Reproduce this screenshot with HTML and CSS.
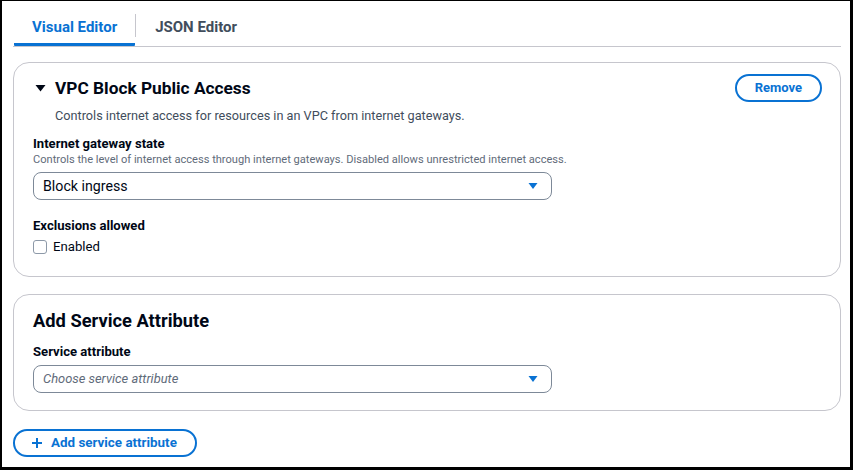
FILE: index.html
```html
<!DOCTYPE html>
<html lang="en">
<head>
<meta charset="utf-8">
<title>Editor</title>
<link rel="stylesheet" href="styles.css">
</head>
<body>
<div class="frame">
  <div class="tabs">
    <div class="tab tab-active">Visual Editor</div>
    <div class="tab-sep"></div>
    <div class="tab">JSON Editor</div>
  </div>

  <section class="card card-vpc">
    <div class="card-head">
      <div class="card-title-wrap">
        <svg class="caret" width="16" height="16" viewBox="0 0 16 16"><path d="M2.5 5h10l-5 6.5z" fill="#000716"/></svg>
        <h2 class="card-title title-vpc">VPC Block Public Access</h2>
      </div>
      <button class="btn btn-remove">Remove</button>
    </div>
    <p class="card-desc">Controls internet access for resources in an VPC from internet gateways.</p>

    <div class="field">
      <div class="label">Internet gateway state</div>
      <div class="hint">Controls the level of internet access through internet gateways. Disabled allows unrestricted internet access.</div>
      <div class="select">
        <span class="select-value">Block ingress</span>
        <svg class="select-caret" width="16" height="16" viewBox="0 0 16 16"><path d="M3.5 5h9l-4.5 6z" fill="#0972d3"/></svg>
      </div>
    </div>

    <div class="field field-excl">
      <div class="label">Exclusions allowed</div>
      <label class="check-row">
        <span class="checkbox"></span>
        <span class="check-text">Enabled</span>
      </label>
    </div>
  </section>

  <section class="card card-add">
    <h2 class="card-title title-add">Add Service Attribute</h2>
    <div class="field field-svc">
      <div class="label">Service attribute</div>
      <div class="select select-svc">
        <span class="select-placeholder">Choose service attribute</span>
        <svg class="select-caret" width="16" height="16" viewBox="0 0 16 16"><path d="M3.5 5h9l-4.5 6z" fill="#0972d3"/></svg>
      </div>
    </div>
  </section>

  <div class="add-row">
    <button class="btn btn-add">
      <svg class="plus" width="16" height="16" viewBox="0 0 16 16"><path d="M3 8h10M8 3v10" stroke="#0972d3" stroke-width="2" fill="none"/></svg>
      <span>Add service attribute</span>
    </button>
  </div>
</div>
</body>
</html>
```

FILE: styles.css
```css
* { box-sizing: border-box; }
html, body { margin: 0; padding: 0; background: #fff; }
body {
  font-family: Roboto, "Open Sans", "Liberation Sans", sans-serif;
  color: #000716;
  font-size: 14px;
}
.frame {
  width: 853px;
  height: 470px;
  border-style: solid;
  border-color: #000;
  border-width: 1px 3px 3px 2px;
  padding: 0 9px 0 11px;
  overflow: hidden;
}
.tabs {
  display: flex;
  align-items: center;
  border-bottom: 1px solid #c6c6cd;
  height: 46px;
  padding-left: 1px;
}
.tab {
  font-size: 15px;
  font-weight: 700;
  color: #414d5c;
  line-height: 20px;
  padding: 16px 18px 6px 18px;
  height: 45px;
  border-bottom: 3px solid transparent;
}
.tab-active {
  color: #0972d3;
  border-bottom-color: #0972d3;
  border-radius: 0 0 1px 1px;
}
.tab-sep {
  width: 1px;
  height: 23px;
  background: #c6c6cd;
  align-self: flex-start;
  margin-top: 13px;
  margin-right: 1px;
}
.card {
  border: 1px solid #c6c6cd;
  border-radius: 16px;
  padding: 11px 18px 19px 19px;
}
.card-vpc { margin-top: 15px; }
.card-head {
  display: flex;
  align-items: center;
  justify-content: space-between;
  height: 28px;
}
.card-title-wrap {
  display: flex;
  align-items: center;
}
.caret { margin-right: 6px; }
.card-title {
  margin: 0;
  font-weight: 700;
  line-height: 24px;
}
.title-vpc { font-size: 17.3px; }
.title-add { font-size: 18.3px; }
.btn {
  font-family: inherit;
  font-weight: 700;
  color: #0972d3;
  background: #fff;
  border: 2px solid #0972d3;
  border-radius: 20px;
  line-height: 20px;
  display: inline-flex;
  align-items: center;
}
.btn-remove {
  font-size: 13px;
  height: 28px;
  padding: 0 18px;
}
.card-desc {
  margin: 4px 0 0 22px;
  line-height: 20px;
  color: #414d5c;
  font-size: 12.7px;
}
.field { margin-top: 10px; }
.label {
  font-weight: 700;
  font-size: 13.1px;
  line-height: 16px;
}
.hint {
  font-size: 11.1px;
  line-height: 14px;
  color: #5f6b7a;
  margin-top: 1px;
}
.select {
  margin-top: 5px;
  width: 519px;
  height: 28px;
  border: 1px solid #7d8998;
  border-radius: 8px;
  display: flex;
  align-items: center;
  justify-content: space-between;
  padding: 0 10px 0 9px;
  line-height: 20px;
}
.select-value { color: #000716; font-size: 14.2px; }
.select-placeholder { color: #5f6b7a; font-style: italic; font-size: 12.9px; }
.field-excl { margin-top: 18px; }
.check-row {
  display: flex;
  align-items: center;
  margin-top: 3px;
  height: 20px;
}
.checkbox {
  width: 14px;
  height: 14px;
  border: 1.5px solid #8d99a8;
  border-radius: 3px;
  margin-right: 6px;
}
.check-text { line-height: 20px; font-size: 13.2px; }
.card-add {
  margin-top: 17px;
  padding-top: 14px;
  padding-bottom: 17px;
}
.field-svc { margin-top: 10px; }
.field-svc .label { line-height: 18px; }
.select-svc { margin-top: 4px; }
.add-row { margin-top: 18px; }
.btn-add {
  font-size: 13.4px;
  height: 28px;
  padding: 0 18px 0 14px;
}
.plus { margin-right: 6px; }
```
